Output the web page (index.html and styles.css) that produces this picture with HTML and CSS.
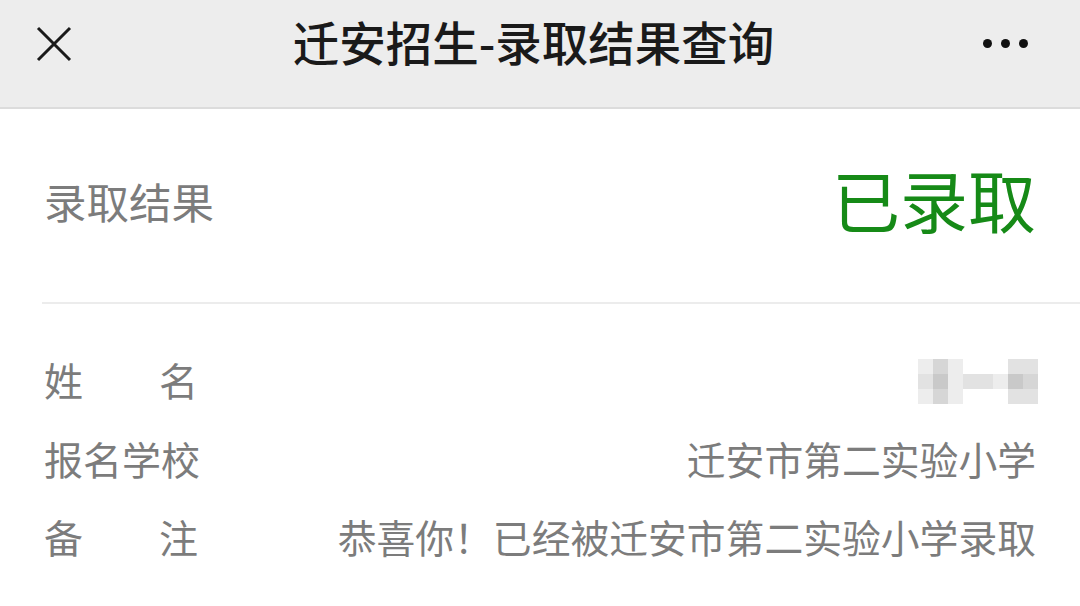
FILE: index.html
```
<!DOCTYPE html>
<html lang="zh-CN">
<head>
    <meta charset="UTF-8">
    <meta name="viewport" content="width=device-width, initial-scale=1.0">
    <title>迁安招生-录取结果查询</title>
    <link rel="stylesheet" href="styles.css">
</head>
<body>
    <div class="nav-bar">
        <div class="nav-close">
            <svg width="36" height="36" viewBox="0 0 36 36">
                <path d="M2 2 L34 34 M34 2 L2 34" stroke="#1a1a1a" stroke-width="3" fill="none"/>
            </svg>
        </div>
        <div class="nav-title">迁安招生-录取结果查询</div>
        <div class="nav-more">
            <span class="dot"></span>
            <span class="dot"></span>
            <span class="dot"></span>
        </div>
    </div>

    <div class="content">
        <div class="result-row">
            <div class="result-label">录取结果</div>
            <div class="result-value">已录取</div>
        </div>

        <div class="info-list">
            <div class="info-row">
                <div class="info-label spread"><span>姓</span><span>名</span></div>
                <div class="info-value">
                    <!-- 이름 모자이크 -->
                    <div class="mosaic">
                        <span class="m1"></span><span class="m3"></span><span class="m1"></span><span class="m0"></span><span class="m0"></span><span class="m0"></span><span class="m2"></span><span class="m2"></span>
                        <span class="m2"></span><span class="m4"></span><span class="m1"></span><span class="m2"></span><span class="m2"></span><span class="m1"></span><span class="m4"></span><span class="m3"></span>
                        <span class="m1"></span><span class="m3"></span><span class="m1"></span><span class="m0"></span><span class="m0"></span><span class="m0"></span><span class="m2"></span><span class="m2"></span>
                    </div>
                </div>
            </div>
            <div class="info-row">
                <div class="info-label">报名学校</div>
                <div class="info-value">迁安市第二实验小学</div>
            </div>
            <div class="info-row">
                <div class="info-label spread"><span>备</span><span>注</span></div>
                <div class="info-value">恭喜你！已经被迁安市第二实验小学录取</div>
            </div>
        </div>
    </div>
</body>
</html>
```

FILE: styles.css
```
body {
    margin: 0;
    background-color: #ffffff;
    font-family: "Noto Sans CJK SC", "Noto Sans", sans-serif;
    width: 1080px;
    overflow: hidden;
}

/* 상단 바 */
.nav-bar {
    height: 107px;
    background-color: #ededed;
    border-bottom: 2px solid #dcdcdc;
    display: flex;
    align-items: center;
    justify-content: space-between;
    padding: 0 52px 0 36px;
    box-sizing: content-box;
}

.nav-close {
    width: 36px;
    height: 36px;
    margin-top: -19px;
}

.nav-close svg {
    display: block;
}

.nav-title {
    font-size: 46.5px;
    font-weight: 500;
    color: #1a1a1a;
    margin-top: -26px;
    margin-left: 12px;
}

.nav-more {
    display: flex;
    gap: 9px;
    margin-top: -21px;
}

.dot {
    width: 9px;
    height: 9px;
    border-radius: 50%;
    background-color: #111111;
}

/* 내용 */
.content {
    padding: 0 44px 0 44px;
}

.result-row {
    display: flex;
    justify-content: space-between;
    align-items: center;
    height: 193px;
    border-bottom: 2px solid #ececec;
    margin-right: -44px;
    padding-right: 44px;
    margin-left: -2px;
    padding-left: 2px;
}

.result-label {
    font-size: 42.5px;
    color: #7c7c7c;
    margin-top: -10px;
}

.result-value {
    font-size: 68px;
    color: #168a17;
    margin-top: -14px;
}

.info-list {
    padding-top: 36px;
}

.info-row {
    display: flex;
    justify-content: space-between;
    align-items: center;
    height: 78.5px;
}

.info-label {
    font-size: 39px;
    color: #7c7c7c;
    width: 154px;
    white-space: nowrap;
}

.info-label.spread {
    display: flex;
    justify-content: space-between;
}

.info-value {
    font-size: 38.8px;
    color: #7c7c7c;
    white-space: nowrap;
}

/* 모자이크 */
.mosaic {
    display: grid;
    grid-template-columns: repeat(8, 15px);
    grid-template-rows: repeat(3, 15px);
    margin-right: -2px;
    margin-top: 4px;
}

.m0 { background-color: #ffffff; }
.m1 { background-color: #ededed; }
.m2 { background-color: #e2e2e2; }
.m3 { background-color: #d6d6d6; }
.m4 { background-color: #c9c9c9; }
```
